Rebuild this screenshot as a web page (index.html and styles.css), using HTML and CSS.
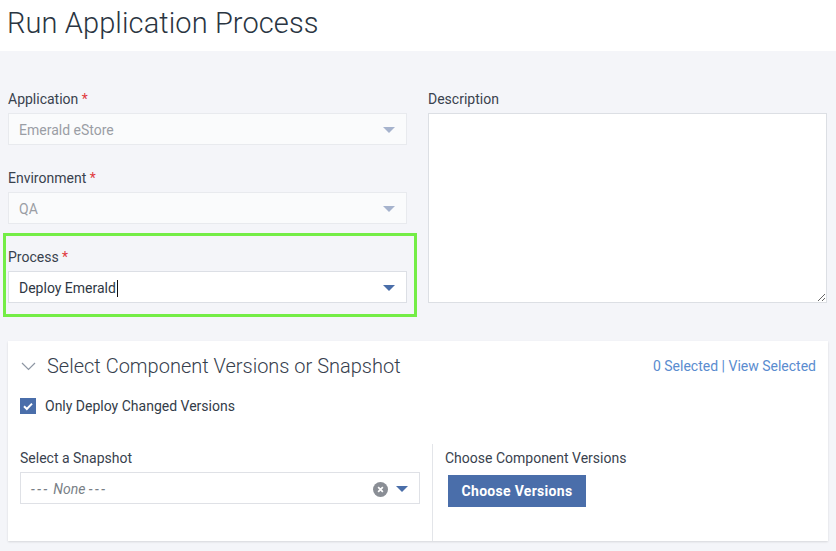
FILE: index.html
```html
<!DOCTYPE html>
<html>
<head>
<meta charset="utf-8">
<link rel="stylesheet" href="styles.css">
</head>
<body>
<header class="page-header"><h1 class="title">Run Application Process</h1></header>
<main class="main">
  <div class="form-grid">
    <div class="col">
      <div class="field">
        <div class="label">Application <span class="req">*</span></div>
        <div class="select disabled"><span class="value">Emerald eStore</span><span class="arrow"></span></div>
      </div>
      <div class="field">
        <div class="label">Environment <span class="req">*</span></div>
        <div class="select disabled"><span class="value">QA</span><span class="arrow"></span></div>
      </div>
      <div class="field highlight">
        <div class="label">Process <span class="req">*</span></div>
        <div class="select active"><span class="value">Deploy Emerald<span class="caret"></span></span><span class="arrow"></span></div>
      </div>
    </div>
    <div class="col">
      <div class="field">
        <div class="label">Description</div>
        <textarea class="textarea"></textarea>
      </div>
    </div>
  </div>

  <section class="card">
    <div class="card-head">
      <div class="card-title">
        <svg class="chev" width="15" height="9" viewBox="0 0 15 9"><path d="M1 1 L7.5 7.5 L14 1" fill="none" stroke="#8d96a3" stroke-width="1.2"/></svg>
        <span>Select Component Versions or Snapshot</span>
      </div>
      <div class="links">0 Selected | View Selected</div>
    </div>
    <label class="check-row">
      <span class="checkbox"><svg width="16" height="16" viewBox="0 0 16 16"><path d="M4 8.3 L6.8 11 L12 5.6" fill="none" stroke="#fff" stroke-width="2"/></svg></span>
      <span>Only Deploy Changed Versions</span>
    </label>
    <div class="card-grid">
      <div class="pane left">
        <div class="label">Select a Snapshot</div>
        <div class="select snap"><span class="value none"><span class="dash">---</span> None <span class="dash">---</span></span>
          <span class="clear"><svg width="15" height="15" viewBox="0 0 14 14"><circle cx="7" cy="7" r="7" fill="#8a8e95"/><path d="M4.8 4.8 L9.2 9.2 M9.2 4.8 L4.8 9.2" stroke="#fff" stroke-width="1.6"/></svg></span>
          <span class="arrow"></span></div>
      </div>
      <div class="pane right">
        <div class="label">Choose Component Versions</div>
        <button class="btn">Choose Versions</button>
      </div>
    </div>
  </section>
</main>
</body>
</html>
```
FILE: styles.css
```css
* { box-sizing: border-box; }
html, body { margin: 0; padding: 0; }
body {
  background: #f4f5f9;
  font-family: Roboto, "Noto Sans", sans-serif;
  color: #3a4452;
  font-size: 14px;
  height: 551px;
  overflow: hidden;
}
.page-header {
  background: #fff;
  height: 51px;
  padding: 5px 7px 0;
}
.title {
  margin: 0;
  font-weight: 300;
  font-size: 29px;
  line-height: 36px;
  color: #2a3542;
  letter-spacing: 0.1px;
}
.main { padding: 38px 8px 0; }
.form-grid {
  display: grid;
  grid-template-columns: 399px 399px;
  column-gap: 21px;
}
.field { margin-bottom: 23px; }
.label {
  line-height: 20px;
  font-size: 14px;
  color: #39424e;
  margin-bottom: 4px;
}
.req { color: #e0393e; }
.select {
  height: 32px;
  border: 1px solid #e3e5ea;
  background: #fff;
  display: flex;
  align-items: center;
  padding: 2px 10px 0 10px;
}
.select .value { flex: 1; font-size: 14px; }
.select.disabled { background: #fafbfc; border-color: #e8eaee; }
.select.disabled .value { color: #9a9ea5; }
.select.active { border-color: #dcdfe5; }
.select.active .value { color: #2f3844; }
.arrow {
  width: 0; height: 0;
  border-left: 6px solid transparent;
  border-right: 6px solid transparent;
  border-top: 6px solid #4a6ea9;
  margin-right: 1px;
}
.disabled .arrow { border-top-color: #a6b3cd; }
.caret {
  display: inline-block;
  width: 1px;
  height: 17px;
  background: #111;
  vertical-align: -4px;
  margin-left: 1px;
}
.highlight {
  border: 3px solid #74ed46;
  margin: -14px -10px 0 -5px;
  padding: 11px 7px 11px 2px;
}
.textarea {
  display: block;
  width: 399px;
  height: 190px;
  border: 1px solid #dcdfe4;
  background: #fff;
  resize: vertical;
  font-family: inherit;
  margin: 0;
}
.card {
  margin-top: 15px;
  background: #fff;
  width: 820px;
  height: 200px;
  box-shadow: 0 1px 2px rgba(0,0,0,0.12);
  padding: 13px 12px 0 12px;
}
.card-head {
  display: flex;
  justify-content: space-between;
  align-items: center;
  height: 24px;
}
.card-title {
  display: flex;
  align-items: center;
  font-size: 20px;
  color: #36404d;
  font-weight: 300;
}
.chev { margin: 0 11px 0 1px; }
.links { color: #5a8ccf; font-size: 14px; }
.check-row {
  display: flex;
  align-items: center;
  margin-top: 20px;
  height: 16px;
  font-size: 14px;
  color: #333c48;
}
.checkbox {
  width: 16px; height: 16px;
  background: #4a6eaa;
  margin-right: 9px;
  display: inline-flex;
}
.card-grid {
  display: grid;
  grid-template-columns: 412px 1fr;
  margin-top: 30px;
}
.pane { padding-top: 4px; height: 97px; }
.pane.left { padding-right: 12px; }
.pane.right { border-left: 1px solid #e3e5e9; padding-left: 12px; }
.select.snap { border-color: #dfe1e6; }
.value.none { font-style: italic; color: #7a7f87; }
.dash { letter-spacing: 2.5px; }
.clear { display: inline-flex; margin-right: 8px; }
.btn {
  display: block;
  margin: 7px 0 0 3px;
  height: 32px;
  width: 138px;
  border: 0;
  background: #4a6eaa;
  color: #fff;
  font-family: inherit;
  font-weight: 700;
  font-size: 14px;
  letter-spacing: 0.3px;
  padding: 0;
}
```
